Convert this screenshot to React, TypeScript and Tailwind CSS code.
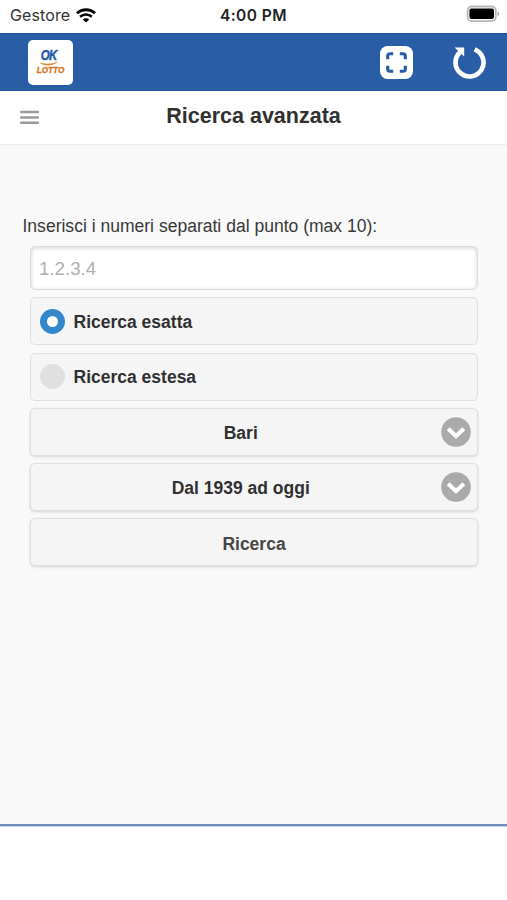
import React from "react";

function WifiIcon() {
  return (
    <svg width="20" height="15" viewBox="0 0 20 15" fill="none" stroke="#050505">
      <path d="M1 5.2C6 .5 14 .5 19 5.2" strokeWidth="2.9" />
      <path d="M4.1 8.7c3.4-3 8.4-3 11.8 0" strokeWidth="2.6" />
      <path d="M10 14.4 6.8 11.4c1.8-1.6 4.6-1.6 6.4 0Z" fill="#050505" stroke="none" />
    </svg>
  );
}

function StatusBar() {
  return (
    <div className="flex h-[33px] items-start justify-between pl-[10px] pr-[7px] pt-[5px] font-['Inter','Liberation_Sans',sans-serif]">
      <div className="flex w-[160px] items-center gap-[6px]">
        <span className="text-[16px] leading-5 tracking-[0.12px] text-[#333]">Gestore</span>
        <WifiIcon />
      </div>
      <span className="-ml-[3px] text-[15.5px] font-semibold leading-[21px] tracking-[0.45px] text-[#222]">4:00 PM</span>
      <div className="flex w-[160px] justify-end">
        <svg width="34" height="17" viewBox="0 0 34 17">
          <rect x="1.6" y="1.5" width="28.2" height="14.6" rx="4.2" fill="#fff" stroke="#b8b8b8" strokeWidth="1.8" />
          <rect x="3.4" y="3.6" width="24.6" height="10.4" rx="2" fill="#000" />
          <path d="M31.6 6.5v4.6c2.2-.8 2.2-3.8 0-4.6Z" fill="#a5a5a5" />
        </svg>
      </div>
    </div>
  );
}

function Logo() {
  return (
    <div className="flex h-[45px] w-[45px] flex-col items-center rounded-[5px] bg-white pt-[9px]">
      <span className="mr-[3px] origin-center scale-x-[0.82] text-[14px] font-bold italic leading-[13px] tracking-[-0.8px] text-[#1c58a8] [-webkit-text-stroke:0.4px_#1c58a8]">
        OK
      </span>
      <svg width="20" height="5" viewBox="0 0 20 5" className="-mt-[1px] mr-[3px]">
        <path d="M.5 1.2C5 3.2 13 3.4 19.5.2 14 5.8 4 5.8.5 1.2Z" fill="#dc8a35" />
      </svg>
      <span className="text-[8.2px] font-bold italic leading-[9px] text-[#cf7420] [-webkit-text-stroke:0.3px_#cf7420]">LOTTO</span>
    </div>
  );
}

function Header() {
  return (
    <header className="flex h-[58px] items-center justify-between border-y border-[#1f509a] bg-[#295ea7] pl-[28px] pr-[21px]">
      <Logo />
      <div className="flex items-center gap-[39px]">
        <svg width="33" height="33" viewBox="0 0 33 33">
          <rect width="33" height="33" rx="7.5" fill="#fff" />
          <path
            d="M7.7 13.2V10q0-2.3 2.3-2.3H13.2M19.8 7.7h3.2q2.3 0 2.3 2.3V13.2M25.3 19.8v3.2q0 2.3-2.3 2.3H19.8M13.2 25.3H10q-2.3 0-2.3-2.3V19.8"
            fill="none"
            stroke="#295ea7"
            strokeWidth="3.1"
          />
        </svg>
        <svg width="34" height="34" viewBox="0 0 34 34">
          <path d="M22.6 4.4A14 14 0 1 1 8 7.2" fill="none" stroke="#fff" strokeWidth="4.7" />
          <path d="M2.6 2.6H12.2V11.4Z" fill="#fff" />
        </svg>
      </div>
    </header>
  );
}

function TitleBar() {
  return (
    <div className="flex h-[54px] border-b border-[#ededed] bg-white pl-[20px] pr-[39px]">
      <svg width="19" height="15" viewBox="0 0 19 15" className="mt-[19px] shrink-0">
        <path d="M1.2 2h16.6M1.2 7.4h16.6M1.2 12.8h16.6" stroke="#999" strokeWidth="2.5" strokeLinecap="round" />
      </svg>
      <h1 className="flex-1 pt-[11px] text-center text-[21.5px] font-bold leading-7 text-[#303030]">Ricerca avanzata</h1>
    </div>
  );
}

function RadioRow({ label, checked }: { label: string; checked?: boolean }) {
  return (
    <label className="flex h-[48px] items-center gap-[9px] rounded-[5px] border-[1.5px] border-[#e0e0e0] bg-[#f5f5f5] pl-[8.5px]">
      <span
        className={
          checked
            ? "flex h-[25px] w-[25px] items-center justify-center rounded-full bg-[#3388cc]"
            : "h-[25px] w-[25px] rounded-full bg-[#e0e0e0]"
        }
      >
        {checked && <span className="h-[11px] w-[11px] rounded-full bg-white" />}
      </span>
      <span className="pt-[1px] text-[17.5px] font-bold leading-5 text-[#303030]">{label}</span>
    </label>
  );
}

function SelectRow({ label }: { label: string }) {
  return (
    <button className="flex h-[48px] w-full items-center rounded-[5px] border-[1.5px] border-[#dfdfdf] bg-[#f5f5f5] pl-[9px] pr-[6.5px] shadow-[0_1px_3px_rgba(0,0,0,0.15)]">
      <span className="flex-1 pl-px pt-[1.5px] text-center text-[17.5px] font-bold leading-5 text-[#303030]">{label}</span>
      <svg width="30" height="30" viewBox="0 0 30 30">
        <circle cx="15" cy="15" r="14.8" fill="#aaa" />
        <path d="m7.2 11.8 7.8 7.4 7.8-7.4" fill="none" stroke="#fff" strokeWidth="4.2" />
      </svg>
    </button>
  );
}

export default function App() {
  return (
    <div className="flex h-[900px] w-full flex-col bg-white font-['Liberation_Sans',Arial,sans-serif]">
      <StatusBar />
      <Header />
      <TitleBar />
      <main className="flex-1 bg-[#f9f9f9] pl-[30px] pr-[29px] pt-[70px]">
        <p className="-ml-[7.5px] text-[17.55px] leading-[22px] text-[#383838]">Inserisci i numeri separati dal punto (max 10):</p>
        <div className="mt-[9px] flex flex-col gap-[7.3px]">
          <input
            placeholder="1.2.3.4"
            className="h-[44px] w-full rounded-[5px] border-[1.5px] border-[#dcdcdc] bg-white px-[8px] pt-[2px] text-[18.7px] shadow-[inset_0_1px_4px_rgba(0,0,0,0.18)] placeholder:text-[#b0b0b0]"
          />
          <RadioRow label="Ricerca esatta" checked />
          <RadioRow label="Ricerca estesa" />
          <SelectRow label="Bari" />
          <SelectRow label="Dal 1939 ad oggi" />
          <button className="h-[48px] w-full rounded-[5px] border-[1.5px] border-[#dfdfdf] bg-[#f5f5f5] pt-[3px] text-center text-[17.5px] font-bold leading-5 text-[#464646] shadow-[0_1px_3px_rgba(0,0,0,0.15)]">
            Ricerca
          </button>
        </div>
      </main>
      <footer className="h-[76px] border-t-2 border-[#6c8bbd] bg-white shadow-[inset_0_1px_0_#c6dcec]" />
    </div>
  );
}
